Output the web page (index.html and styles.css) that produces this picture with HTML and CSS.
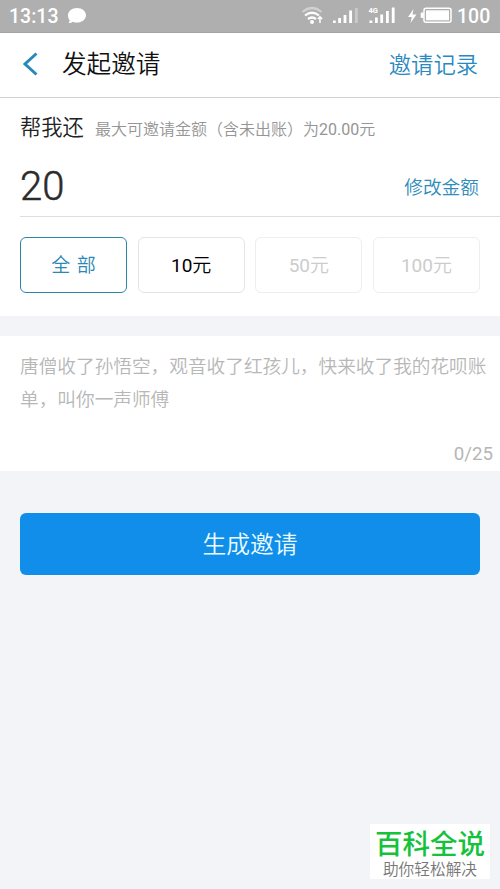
FILE: index.html
```html
<!DOCTYPE html>
<html lang="zh-CN">
<head>
<meta charset="utf-8">
<title>发起邀请</title>
<link rel="stylesheet" href="styles.css">
</head>
<body>
<div class="status">
  <span class="clock">13:13</span>
  <svg class="bubble" width="20" height="18" viewBox="0 0 20 18"><path fill="#fff" d="M10 1c5 0 9 3.200 9 7.300s-4 7.300-9 7.300c-1.600 0-3-.3-4.300-.9C4.700 15.700 3 16.200 1.500 16c.8-.8 1.200-1.700 1.200-2.700C1.600 12 1 10.200 1 8.300 1 4.200 5 1 10 1z"/></svg>
  <svg class="signals" width="154" height="24" viewBox="0 0 154 24">
    <g fill="none" stroke="#fff" stroke-width="2.200">
      <path stroke="#d0d0d0" d="M1.500 8q9.500-8 19 0"/>
      <path d="M4 11.500q7-5.500 14 0"/>
      <path d="M7 15q4-3 8 0"/>
      <path stroke-width="1.500" d="M19 19v-6M16.800 15.100l2.200-2.300 2.200 2.300"/>
      <rect x="123" y="4.300" width="27" height="14" rx="2" stroke-width="1.500"/>
    </g>
    <circle cx="11" cy="18" r="2" fill="#fff"/>
    <g fill="#fff">
      <path d="M32 16.500h2.800v2.500h-2.800zM37.200 14h2.800v5h-2.800zM42.600 11h2.800v8h-2.800zM48.200 6.500h2.800v12.500h-2.800z"/>
      <path fill="#c9c9c9" d="M54 4h2.800v15h-2.800z"/>
      <path d="M68.500 16.500h2.800v2.500h-2.800zM74 13.500h2.800v5.500h-2.800zM79.300 10.500h2.800v8.500h-2.800zM85 7h2.800v12h-2.800zM90.800 3.500h2.800v15.500h-2.800z"/>
      <path d="M112.500 5l-5.500 8h3.800l-1.300 6 6-8.500h-4z"/>
      <rect x="125" y="6.300" width="23" height="10"/>
      <rect x="119.700" y="8.500" width="3" height="5.500" rx="1"/>
      <text class="net" x="67.500" y="8.700">4G</text>
    </g>
  </svg>
  <span class="battery">100</span>
</div>
<header class="nav">
  <svg class="back" width="18" height="24" viewBox="0 0 18 24"><path fill="none" stroke="#2a87bd" stroke-width="3" d="M15.500 1.500L4 12l11.500 10.500"/></svg>
  <h1>发起邀请</h1>
  <a class="records">邀请记录</a>
</header>
<section class="amount">
  <div class="caption"><span class="who">帮我还</span><span class="limit">最大可邀请金额（含未出账）为<b>20.00</b>元</span></div>
  <div class="value"><span class="number">20</span><a class="edit">修改金额</a></div>
  <div class="choices">
    <div class="choice active">全 部</div>
    <div class="choice strong"><span><b>10</b>元</span></div>
    <div class="choice disabled"><span><b>50</b>元</span></div>
    <div class="choice disabled"><span><b>100</b>元</span></div>
  </div>
</section>
<section class="message">
  <p>唐僧收了孙悟空，观音收了红孩儿，快来收了我的花呗账单，叫你一声师傅</p>
  <div class="count"><b>0/25</b></div>
</section>
<div class="submit">生成邀请</div>
<aside class="mark"><strong>百科全说</strong><span>助你轻松解决</span></aside>
</body>
</html>
```
FILE: styles.css
```css
* { box-sizing: border-box; }
body {
  margin: 0;
  height: 889px;
  position: relative;
  overflow: hidden;
  background: #f2f4f8;
  font-family: Roboto, "Noto Sans CJK SC", sans-serif;
  font-weight: 350;
  color: #222;
  white-space: nowrap;
}
b { font-weight: 400; }
.status {
  height: 33px;
  display: flex;
  align-items: center;
  background: #afafaf;
  border-bottom: 1px solid #a4a4a4;
  color: #fff;
  font-size: 19.500px;
  font-weight: 500;
  padding-left: 9px;
}
.clock { width: 58px; }
.battery { margin-left: 2px; }
.signals { margin-left: 214px; }
.net { font-size: 7.500px; font-weight: 700; }
.nav {
  height: 65px;
  display: flex;
  align-items: center;
  background: #fff;
  border-bottom: 1px solid #d2d3d5;
  padding: 0 22px 4px 21px;
}
.back { margin-top: 2px; }
h1 { margin: -2px auto 0 23px; font-size: 24.600px; font-weight: 350; color: #111; }
.records { font-size: 22.300px; color: #2a8abf; }
.amount { height: 218px; background: #fff; padding: 10px 20px 0; }
.caption { display: flex; align-items: center; height: 34px; }
.who { font-size: 21.300px; width: 75px; }
.limit { font-size: 16px; color: #959595; padding-top: 5px; }
.value {
  height: 75px;
  display: flex;
  justify-content: space-between;
  align-items: center;
  border-bottom: 1px solid #dedede;
  margin-right: -20px;
  padding: 12px 21px 0 0;
}
.number { font-size: 40px; font-weight: 300; margin-top: 2px; color: #2b2b2b; -webkit-text-stroke: 0.5px #2b2b2b; }
.edit { font-size: 18.700px; color: #2f8db9; }
.choices { display: grid; grid-template-columns: repeat(4, 107px); justify-content: space-between; margin-top: 20px; }
.choice {
  height: 56px;
  display: flex;
  align-items: center;
  justify-content: center;
  border: 1px solid #e4e4e4;
  border-radius: 6px;
  font-size: 19px;
  padding-bottom: 3px;
  color: #1a1a1a;
}
.strong { color: #000; }
.active { border: 1.500px solid #2c86a8; color: #2b88b4; word-spacing: 2px; }
.disabled { border-color: #eee; color: #ccc; }
.message { height: 135px; margin-top: 20px; background: #fff; padding: 15px 7px 0 20px; }
.message p { margin: 0; width: 470px; height: 92px; font-size: 18.660px; line-height: 33px; color: #b7b7b7; white-space: normal; }
.count { text-align: right; font-size: 18.700px; color: #b6b6b6; }
.submit {
  margin: 42px 20px 0;
  height: 62px;
  display: flex;
  align-items: center;
  justify-content: center;
  background: #108ee9;
  border-radius: 6px;
  color: #e9fbff;
  font-size: 23.800px;
  padding-bottom: 3px;
}
.mark {
  position: absolute;
  left: 370px;
  top: 824px;
  width: 120px;
  height: 55px;
  background: #fff;
  display: flex;
  flex-direction: column;
  align-items: center;
  padding-top: 4px;
}
.mark strong { font-size: 27.500px; line-height: 34px; font-weight: 500; color: #15c23c; }
.mark span { font-size: 15.700px; line-height: 15px; color: #777; }
```
